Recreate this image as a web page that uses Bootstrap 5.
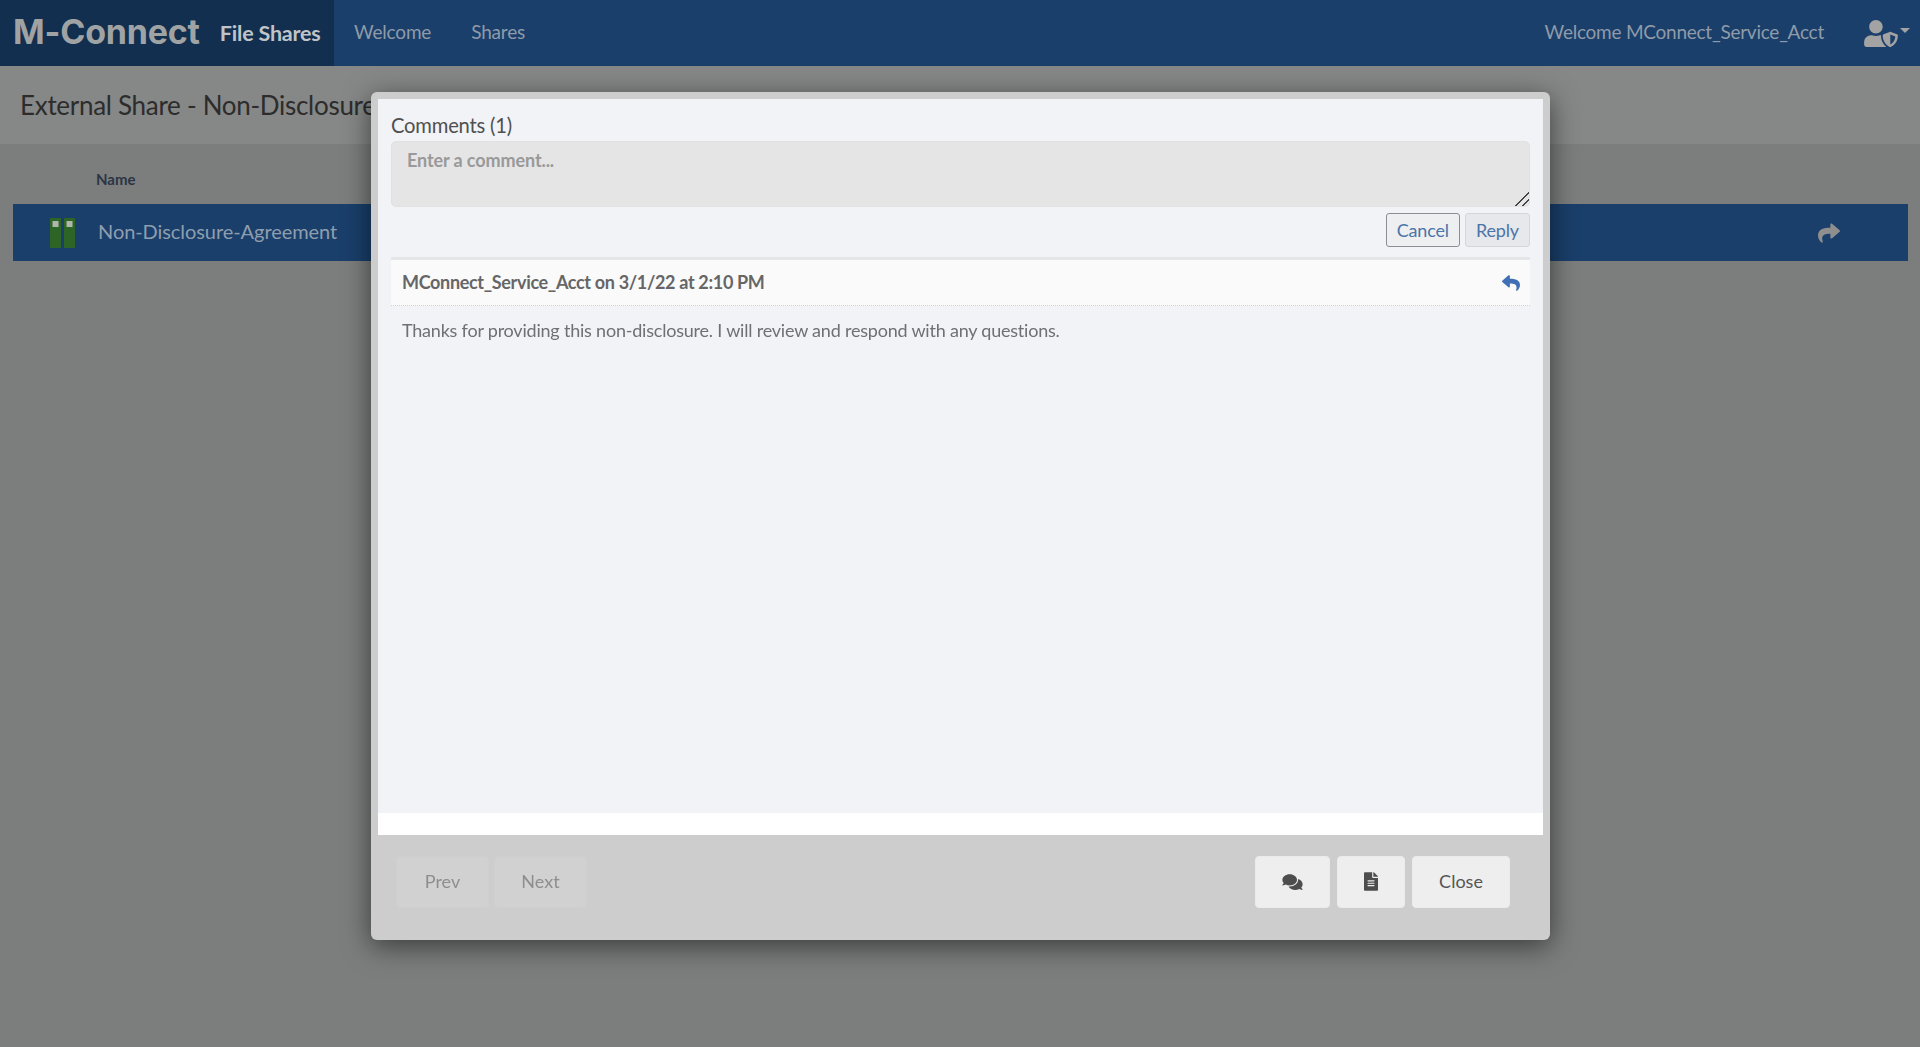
<!DOCTYPE html>
<html lang="en">
<head>
<meta charset="utf-8">
<title>External Share</title>
<link href="https://cdn.jsdelivr.net/npm/bootstrap@5.3.0/dist/css/bootstrap.min.css" rel="stylesheet">
<style>
html,body{height:100%}
body{font-family:"Lato","Liberation Sans",sans-serif;background:#7c7e7e;color:#333;overflow:hidden}
.topbar{height:66px;background:#1a3f6b;padding:0}
.brandbox{width:334px;height:66px;background:#122f50;display:flex;align-items:center;padding:0 0 2px 13px}
.logo{font-family:"Inter","Open Sans",sans-serif;font-weight:700;font-size:34px;letter-spacing:-.2px;color:#a0a3a4;line-height:1}
.apptitle{font-weight:700;font-size:21.5px;letter-spacing:-.2px;color:#c0c4c8;margin-left:20px;position:relative;top:1px}
.topbar .nav-link{color:#8f9ba8;font-size:19px;letter-spacing:-.18px;padding:0 20px 2px}
.welcome{color:#8f9ba8;font-size:19px;letter-spacing:-.25px;margin:0 40px 2px 0}
.usericon{width:34px;height:27px;fill:#a3a3a3}
.caretmark{display:inline-block;border-top:5px solid #a3a3a3;border-left:5px solid transparent;border-right:5px solid transparent;margin:0 10px 6px 2px}
.titlestrip{height:79px;background:#868787;border-bottom:1px solid #7b7c7c;padding:2px 20px 0}
.titlestrip h1{font-size:26px;font-weight:400;letter-spacing:-.29px;margin:0;color:#2c2c2c}
.namehead{height:59px;padding:25px 0 0 96px;font-size:15px;font-weight:700;color:#2b3545;line-height:18px}
.filerow{height:57px;margin:0 12px 0 13px;background:#1a3f6b;padding:0 68px 0 37px}
.fileicon{width:25px;height:30px}
.filename{font-size:20px;letter-spacing:-.07px;color:#8f9eae;margin:0 0 3px 23px}
.shareicon{width:22px;height:22px;fill:#8f8f8f}
.modalwrap{background:transparent}
.modal-dialog.sheet{max-width:1179px;margin:92px 0 0 371px}
.sheetbody{background:#cdcdcd;border:0;border-radius:6px;box-shadow:0 6px 28px rgba(0,0,0,.55);padding:7px 7px 0}
.whitepane{background:#fff;height:736px;padding-bottom:22px;display:flex}
.commentpane{background:#f1f3f7;flex:1;padding:15px 13px 0;display:flex;flex-direction:column}
.commentlabel{font-size:20.2px;letter-spacing:-.2px;line-height:23px;color:#505050;margin-bottom:0}
.commentbox{height:66px;background:#e5e5e5;border:1px solid #e1e1e1;border-radius:5px;font-size:18px;letter-spacing:-.1px;padding:7px 15px;color:#555;line-height:23px;margin-top:4px}
.commentbox::placeholder{color:#999;font-weight:700;opacity:1}
.commentbox:focus{background:#e5e5e5;box-shadow:none;border-color:#e1e1e1}
.commentbox::-webkit-resizer{background:linear-gradient(135deg,transparent 0 52%,#444 52% 58%,transparent 58% 76%,#444 76% 82%,transparent 82%)}
.actions{height:34px;margin-top:6px;gap:5px}
.btn.smallbtn{height:34px;font-size:18px;letter-spacing:-.15px;line-height:24px;color:#4b74a8;padding:4px 10px;background:#eeeff1;border:1px solid #8a8f94;border-radius:3px}
.btn.smallbtn.quiet{background:#e7e8eb;border-color:#d5d6d9}
.commenthead{height:49px;margin-top:10px;background:#fafafa;border-top:3px solid #e5e6e8;border-bottom:1px dotted #cfd0d2;padding:0 10px 0 11px;font-size:18px;font-weight:700;color:#666;letter-spacing:-.33px}
.replyicon{width:18px;height:18px;fill:#3f6fb5}
.commenttext{font-size:18px;letter-spacing:-.21px;color:#6e7073;padding:11px 11px 0;line-height:26px;margin:0}
.sheetfoot{height:105px;padding:21px 33px 0 18px}
.btn.footbtn{height:52px;background:#eeeeee;border:1px solid #ebebeb;border-radius:4px;color:#555;font-size:18px;display:inline-flex;align-items:center;justify-content:center;padding-bottom:7px}
.btn.footbtn:disabled{background:#d1d1d1;border-color:#cfcfcf;color:#8e8e8e;opacity:1}
.btn.wprev{width:93px}.btn.wnext{width:93px}.btn.wchat{width:75px}.btn.wfile{width:68px}.btn.wclose{width:98px}
.gapwide{gap:5px}.gapwider{gap:7px}
.footicon{fill:#4d4d4d}
</style>
</head>
<body>
<nav class="navbar topbar d-flex align-items-center flex-nowrap">
  <div class="d-flex align-items-center">
    <div class="brandbox"><span class="logo">M-Connect</span><span class="apptitle">File Shares</span></div>
    <ul class="nav">
      <li class="nav-item"><a class="nav-link" href="#">Welcome</a></li>
      <li class="nav-item"><a class="nav-link" href="#">Shares</a></li>
    </ul>
  </div>
  <div class="d-flex align-items-center">
    <span class="welcome">Welcome MConnect_Service_Acct</span>
    <svg class="usericon" viewBox="0 0 640 512"><path d="M622.3 271.1l-115.2-45c-4.1-1.6-12.6-3.7-22.2 0l-115.2 45c-10.7 4.2-17.7 14-17.7 24.9 0 111.6 68.7 188.8 132.9 213.9 9.6 3.7 18 1.6 22.2 0C558.4 489.9 640 420.5 640 296c0-10.9-7-20.7-17.7-24.9zM496 462.4V273.3l95.5 37.3c-5.6 87.1-60.9 135.4-95.5 151.8zM224 256c70.7 0 128-57.3 128-128S294.7 0 224 0 96 57.3 96 128s57.3 128 128 128zm96 40c0-2.5.8-4.7 1.1-7.2-2.5-.1-4.9-.8-7.5-.8h-16.7c-22.2 10.2-46.9 16-72.9 16s-50.6-5.8-72.9-16h-16.7C60.2 288 0 348.2 0 422.4V464c0 26.5 21.5 48 48 48h352c6.8 0 13.3-1.5 19.2-4-54-42.9-99.2-116.7-99.2-212z"/></svg>
    <span class="caretmark"></span>
  </div>
</nav>
<div class="titlestrip d-flex align-items-center"><h1>External Share - Non-Disclosure-Agreement</h1></div>
<div class="namehead">Name</div>
<div class="filerow d-flex align-items-center justify-content-between">
  <div class="d-flex align-items-center">
    <svg class="fileicon" viewBox="0 0 25 30"><rect x="0" y="0" width="11" height="30" rx="1" fill="#2d6526"/><rect x="14" y="0" width="11" height="30" rx="1" fill="#2d6526"/><rect x="2.5" y="3" width="6" height="6" fill="#b0b6aa"/><rect x="16.5" y="3" width="6" height="6" fill="#b0b6aa"/></svg>
    <span class="filename">Non-Disclosure-Agreement</span>
  </div>
  <svg class="shareicon" viewBox="0 0 512 512"><path d="M503.691 189.836L327.687 37.851C312.281 24.546 288 35.347 288 56.015v80.053C127.371 137.907 0 170.1 0 322.326c0 61.441 39.581 122.309 83.333 154.132 13.653 9.931 33.111-2.533 28.077-18.631C66.066 312.814 132.917 274.316 288 272.085V360c0 20.7 24.3 31.453 39.687 18.164l176.004-152c11.071-9.562 11.086-26.753 0-36.328z"/></svg>
</div>

<div class="modal modalwrap d-block" tabindex="-1">
  <div class="modal-dialog sheet">
    <div class="modal-content sheetbody">
      <div class="whitepane">
        <div class="commentpane">
          <label class="commentlabel" for="cbox">Comments (1)</label>
          <textarea id="cbox" class="form-control commentbox" placeholder="Enter a comment..."></textarea>
          <div class="actions d-flex justify-content-end">
            <button type="button" class="btn smallbtn">Cancel</button>
            <button type="button" class="btn smallbtn quiet">Reply</button>
          </div>
          <div class="commenthead d-flex align-items-center justify-content-between">
            <span>MConnect_Service_Acct on 3/1/22 at 2:10 PM</span>
            <svg class="replyicon" viewBox="0 0 512 512"><path d="M8.309 189.836L184.313 37.851C199.719 24.546 224 35.347 224 56.015v80.053c160.629 1.839 288 34.032 288 186.258 0 61.441-39.581 122.309-83.333 154.132-13.653 9.931-33.111-2.533-28.077-18.631 45.344-145.012-21.507-183.51-176.59-185.742V360c0 20.7-24.3 31.453-39.687 18.164l-176.004-152c-11.071-9.562-11.086-26.753 0-36.328z"/></svg>
          </div>
          <p class="commenttext">Thanks for providing this non-disclosure. I will review and respond with any questions.</p>
        </div>
      </div>
      <div class="sheetfoot d-flex justify-content-between align-items-start">
        <div class="d-flex gapwide">
          <button type="button" class="btn footbtn wprev" disabled>Prev</button>
          <button type="button" class="btn footbtn wnext" disabled>Next</button>
        </div>
        <div class="d-flex gapwider">
          <button type="button" class="btn footbtn wchat" aria-label="Comments"><svg class="footicon" width="21" height="18" viewBox="0 0 576 512"><path d="M416 192c0-88.4-93.1-160-208-160S0 103.6 0 192c0 34.3 14.1 65.9 38 92-13.4 30.2-35.5 54.2-35.8 54.5-2.2 2.3-2.8 5.7-1.5 8.7S4.8 352 8 352c36.6 0 66.9-12.3 88.7-25 32.2 15.7 70.3 25 111.3 25 114.9 0 208-71.6 208-160zm122 220c23.9-26 38-57.7 38-92 0-66.9-53.5-124.2-129.3-148.1.9 6.6 1.3 13.3 1.3 20.1 0 105.9-107.7 192-240 192-10.8 0-21.3-.8-31.7-1.9C207.8 439.6 281.8 480 368 480c41 0 79.1-9.2 111.3-25 21.8 12.7 52.1 25 88.7 25 3.2 0 6.1-1.9 7.3-4.8 1.3-2.9.7-6.3-1.5-8.7-.3-.3-22.4-24.2-35.8-54.5z"/></svg></button>
          <button type="button" class="btn footbtn wfile" aria-label="Document"><svg class="footicon" width="14" height="19" viewBox="0 0 384 512"><path d="M224 136V0H24C10.7 0 0 10.7 0 24v464c0 13.3 10.7 24 24 24h336c13.3 0 24-10.7 24-24V160H248c-13.2 0-24-10.8-24-24zm64 236c0 6.6-5.4 12-12 12H108c-6.6 0-12-5.4-12-12v-8c0-6.6 5.4-12 12-12h168c6.6 0 12 5.4 12 12v8zm0-64c0 6.6-5.4 12-12 12H108c-6.6 0-12-5.4-12-12v-8c0-6.6 5.4-12 12-12h168c6.6 0 12 5.4 12 12v8zm0-72v8c0 6.6-5.4 12-12 12H108c-6.6 0-12-5.4-12-12v-8c0-6.6 5.4-12 12-12h168c6.6 0 12 5.4 12 12zm96-114.1v6.1H256V0h6.1c6.4 0 12.5 2.5 17 7l97.9 98c4.5 4.5 7 10.6 7 16.9z"/></svg></button>
          <button type="button" class="btn footbtn wclose">Close</button>
        </div>
      </div>
    </div>
  </div>
</div>
<script src="https://cdn.jsdelivr.net/npm/bootstrap@5.3.0/dist/js/bootstrap.bundle.min.js"></script>
</body>
</html>
